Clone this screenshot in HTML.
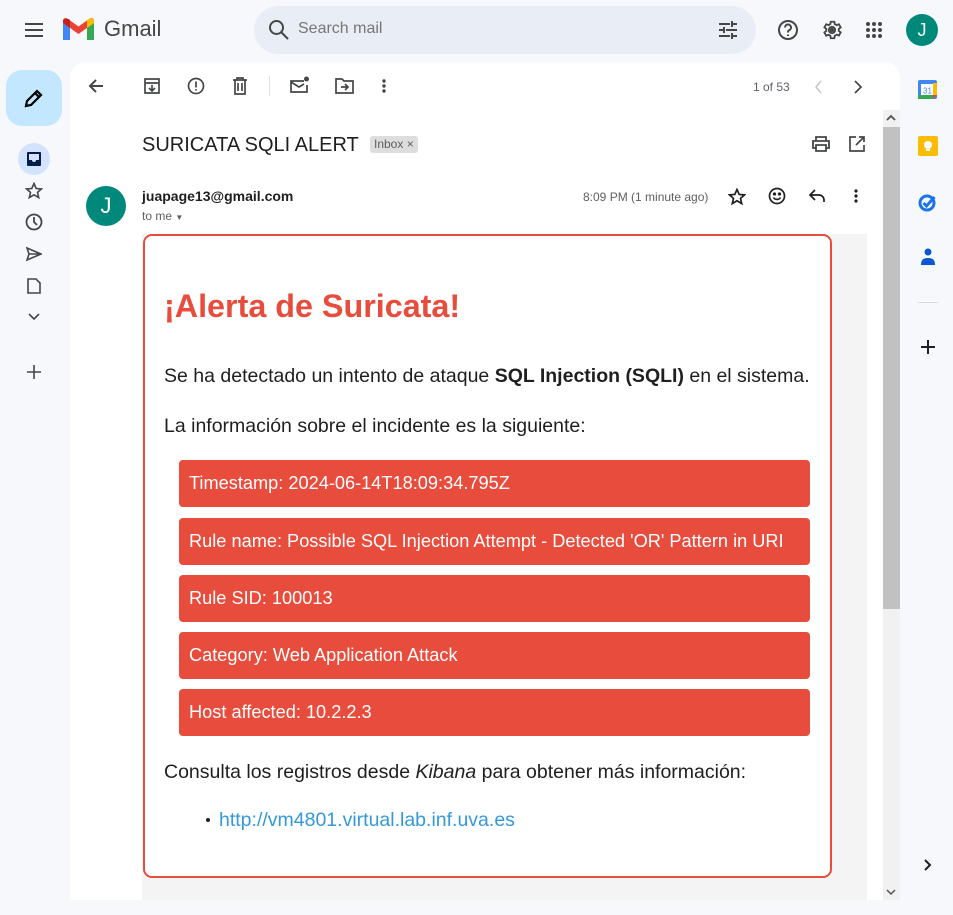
<!DOCTYPE html>
<html><head><meta charset="utf-8">
<style>
*{margin:0;padding:0;box-sizing:border-box}
body{width:953px;height:915px;background:#f6f8fc;font-family:"Liberation Sans",Arial,sans-serif;position:relative;overflow:hidden;color:#202124}
.a{position:absolute}
svg.i{position:absolute;fill:none;stroke:#444746;stroke-width:2}
.row{position:absolute;left:179px;width:631px;height:47px;background:#e74c3c;border-radius:4px;color:#fff;font-size:18.2px;line-height:47px;padding-left:10px}
</style></head><body>
<svg class="i" style="left:24px;top:20px" width="20" height="20"><path d="M1 4h18M1 10h18M1 16h18"/></svg>
<svg class="a" style="left:63px;top:18px" width="31" height="24" viewBox="0 0 31 24">
<path d="M0 5v17h7V10z" fill="#4285f4"/><path d="M24 10v12h7V5z" fill="#34a853"/>
<path d="M0 5l15.5 11L31 5V3c0-3-3-4-5-2L15.5 8.5 5 1C3-0.5 0 0 0 3z" fill="#ea4335"/>
<path d="M24 2v8l7-5V3c0-2-2-3.5-4-2.5z" fill="#fbbc04"/><path d="M0 3v2l7 5V2C5 0 0 0 0 3z" fill="#c5221f"/></svg>
<div class="a" style="left:104px;top:16px;font-size:22px;color:#444746">Gmail</div>
<div class="a" style="left:254px;top:6px;width:502px;height:48px;border-radius:24px;background:#e9eef6"></div>
<svg class="i" style="left:268px;top:19px" width="22" height="22"><circle cx="8.5" cy="8.5" r="6.5"/><path d="M13 13l7 7"/></svg>
<div class="a" style="left:298px;top:20px;font-size:16px;color:#757775">Search mail</div>
<svg class="i" style="left:718px;top:20px" width="20" height="20"><path d="M1 4h11M15 4h4M14 1v6M1 10h4M8 10h11M6 7v6M1 16h11M15 16h4M14 13v6"/></svg>
<svg class="i" style="left:777px;top:19px" width="22" height="22"><circle cx="11" cy="11" r="9"/><path d="M8 8.5a3 3 0 1 1 4 2.8c-1 .4-1 1-1 2.2M11 15.5v1.5"/></svg>
<svg class="a" style="left:821px;top:19px" width="22" height="22" viewBox="0 0 24 24"><path d="M12 15.5A3.5 3.5 0 1 1 12 8.5a3.5 3.5 0 0 1 0 7zm7.4-2.5l2.1 1.6-2 3.5-2.5-1a7.6 7.6 0 0 1-2 1.1L14.6 21h-4l-.4-2.7a7.6 7.6 0 0 1-2-1.1l-2.5 1-2-3.5L5.8 13a7 7 0 0 1 0-2.2L3.7 9.2l2-3.5 2.5 1a7.6 7.6 0 0 1 2-1.1L10.6 3h4l.4 2.6a7.6 7.6 0 0 1 2 1.1l2.5-1 2 3.5-2.1 1.6a7 7 0 0 1 0 2.2z" fill="none" stroke="#444746" stroke-width="2"/><circle cx="12" cy="12" r="2.5" fill="#444746"/></svg>
<svg class="a" style="left:865px;top:21px" width="18" height="18"><g fill="#444746"><circle cx="3" cy="3" r="2"/><circle cx="9" cy="3" r="2"/><circle cx="15" cy="3" r="2"/><circle cx="3" cy="9" r="2"/><circle cx="9" cy="9" r="2"/><circle cx="15" cy="9" r="2"/><circle cx="3" cy="15" r="2"/><circle cx="9" cy="15" r="2"/><circle cx="15" cy="15" r="2"/></g></svg>
<div class="a" style="left:906px;top:14px;width:32px;height:32px;border-radius:50%;background:#00897b;color:#fff;font-size:18px;line-height:32px;text-align:center">J</div>
<div class="a" style="left:6px;top:70px;width:56px;height:56px;border-radius:16px;background:#c2e7ff"></div>
<svg class="i" style="left:24px;top:88px;stroke:#000;stroke-width:2.2" width="20" height="20"><path d="M2 18l1-5L13 3l4 4L7 17z M11 5l4 4"/></svg>
<div class="a" style="left:18px;top:143px;width:32px;height:32px;border-radius:16px;background:#d3e3fd"></div>
<svg class="a" style="left:26px;top:151px" width="16" height="16"><rect x="1" y="1" width="14" height="14" rx="1" fill="#041e49"/><path d="M3 3h10v6h-3a2 2 0 0 1-4 0H3z" fill="#d3e3fd"/></svg>
<svg class="i" style="left:25px;top:182px;stroke-width:1.6" width="18" height="18"><path d="M9 1.5l2.2 5 5.3.4-4 3.5 1.2 5.2L9 12.8 4.3 15.6l1.2-5.2-4-3.5 5.3-.4z"/></svg>
<svg class="i" style="left:25px;top:213px;stroke-width:1.8" width="18" height="18"><circle cx="9" cy="9" r="7.5"/><path d="M9 4v5l3 3"/></svg>
<svg class="i" style="left:26px;top:246px;stroke-width:1.6" width="16" height="16"><path d="M1 2l14 6-14 6 2-6zM3 8h12"/></svg>
<svg class="i" style="left:27px;top:278px;stroke-width:1.6" width="14" height="16"><path d="M1 1h8l4 4v10H1z"/></svg>
<svg class="i" style="left:27px;top:312px;stroke-width:1.6" width="14" height="10"><path d="M2 2l5 5 5-5"/></svg>
<svg class="i" style="left:26px;top:364px;stroke-width:1.6" width="16" height="16"><path d="M8 1v14M1 8h14"/></svg>
<svg class="a" style="left:918px;top:80px" width="19" height="19"><rect x="0" y="0" width="19" height="19" rx="2" fill="#4285f4"/><rect x="3" y="4" width="13" height="11" fill="#fff"/><rect x="0" y="15" width="15" height="4" fill="#34a853"/><rect x="15" y="3" width="4" height="12" fill="#fbbc04"/><path d="M15 15h4l-4 4z" fill="#ea4335"/><text x="9.5" y="13.5" font-size="8" text-anchor="middle" fill="#4285f4" font-family="Liberation Sans">31</text></svg>
<svg class="a" style="left:918px;top:136px" width="20" height="20"><rect width="20" height="20" rx="2" fill="#fbbc04"/><circle cx="10" cy="9" r="4" fill="#fff"/><rect x="8" y="13" width="4" height="2" fill="#fff"/></svg>
<svg class="a" style="left:918px;top:192px" width="20" height="20"><circle cx="9" cy="11" r="7" fill="none" stroke="#1a73e8" stroke-width="3"/><path d="M5.5 11l3 3 8-9" fill="none" stroke="#1a73e8" stroke-width="3"/></svg>
<svg class="a" style="left:920px;top:248px" width="16" height="18"><circle cx="8" cy="4" r="3.5" fill="#0b57d0"/><path d="M1 17c0-5 2-7 7-7s7 2 7 7z" fill="#0b57d0"/></svg>
<div class="a" style="left:918px;top:302px;width:20px;height:1px;background:#dadce0"></div>
<svg class="i" style="left:920px;top:339px;stroke:#1f1f1f" width="16" height="16"><path d="M8 1v14M1 8h14"/></svg>
<svg class="i" style="left:923px;top:858px;stroke:#1f1f1f" width="10" height="14"><path d="M2 2l5 5-5 5"/></svg>
<div class="a" style="left:70px;top:62px;width:830px;height:838px;background:#fff;border-radius:16px 16px 0 0"></div>
<svg class="i" style="left:88px;top:78px" width="16" height="16"><path d="M15 8H2M8 2L2 8l6 6"/></svg>
<svg class="i" style="left:143px;top:77px;stroke-width:1.7" width="18" height="18"><path d="M2 2h14v14H2zM2 6h14M9 8v6M6 11l3 3 3-3"/></svg>
<svg class="i" style="left:187px;top:77px;stroke-width:1.7" width="18" height="18"><circle cx="9" cy="9" r="7.5"/><path d="M9 4.5v6M9 12v1.5"/></svg>
<svg class="i" style="left:232px;top:77px;stroke-width:1.7" width="16" height="18"><path d="M1 3h14M5 3V1h6v2M3 3v14h10V3M6 6v8M10 6v8"/></svg>
<div class="a" style="left:269px;top:76px;width:1px;height:20px;background:#e0e0e0"></div>
<svg class="i" style="left:290px;top:76px;stroke-width:1.7" width="20" height="18"><path d="M14 5H1v11h16V9M1 6l8 5 5-3"/><circle cx="16.5" cy="3" r="2.5" fill="#444746" stroke="none"/></svg>
<svg class="i" style="left:335px;top:78px;stroke-width:1.7" width="19" height="16"><path d="M1 1h6l2 2h9v12H1zM6 9h7M10 6l3 3-3 3"/></svg>
<svg class="a" style="left:381px;top:79px" width="6" height="16"><g fill="#444746"><circle cx="3" cy="2" r="1.7"/><circle cx="3" cy="7" r="1.7"/><circle cx="3" cy="12" r="1.7"/></g></svg>
<div class="a" style="left:753px;top:80px;font-size:12px;color:#5f6368">1 of 53</div>
<svg class="i" style="left:814px;top:80px;stroke:#c4c7c5;stroke-width:1.5" width="10" height="14"><path d="M7 1L2 7l5 6"/></svg>
<svg class="i" style="left:853px;top:80px;stroke-width:1.7" width="10" height="14"><path d="M2 1l6 6-6 6"/></svg>
<div class="a" style="left:883px;top:110px;width:17px;height:790px;background:#f1f1f1"></div>
<div class="a" style="left:883px;top:127px;width:17px;height:482px;background:#c1c1c1"></div>
<svg class="i" style="left:886px;top:114px;stroke:#505050;stroke-width:1.8" width="10" height="8"><path d="M1 6l4-4 4 4"/></svg>
<svg class="i" style="left:886px;top:888px;stroke:#505050;stroke-width:1.5" width="10" height="8"><path d="M1 2l4 4 4-4"/></svg>
<div class="a" style="left:142px;top:134px;font-size:20px;color:#1f1f1f">SURICATA SQLI ALERT</div>
<div class="a" style="left:370px;top:136px;height:17px;padding:0 4px;background:#dddddd;border-radius:3px;font-size:12px;line-height:17px;color:#5e5e5e">Inbox ×</div>
<svg class="i" style="left:812px;top:136px;stroke-width:1.8" width="18" height="16"><path d="M4 5V1h10v4M4 12H1V5h16v7h-3M4 9h10v6H4z"/></svg>
<svg class="i" style="left:849px;top:136px;stroke-width:1.7" width="16" height="16"><path d="M7 1H1v14h14V9M10 1h5v5M15 1L7 9"/></svg>
<div class="a" style="left:86px;top:186px;width:40px;height:40px;border-radius:50%;background:#00897b;color:#fff;font-size:22px;line-height:40px;text-align:center">J</div>
<div class="a" style="left:142px;top:188px;font-size:14px;font-weight:bold;color:#1f1f1f">juapage13@gmail.com</div>
<div class="a" style="left:142px;top:209px;font-size:12px;color:#5e5e5e">to me <span style="font-size:8px">▼</span></div>
<div class="a" style="left:583px;top:190px;font-size:12px;color:#5e5e5e">8:09 PM (1 minute ago)</div>
<svg class="i" style="left:728px;top:188px;stroke-width:1.7;stroke:#1f1f1f" width="18" height="18"><path d="M9 1.5l2.2 5 5.3.4-4 3.5 1.2 5.2L9 12.8 4.3 15.6l1.2-5.2-4-3.5 5.3-.4z"/></svg>
<svg class="i" style="left:768px;top:187px;stroke-width:1.7;stroke:#1f1f1f" width="18" height="18"><circle cx="9" cy="9" r="7.5"/><path d="M5.5 10.5c1.5 2.5 5.5 2.5 7 0"/><circle cx="6.5" cy="7" r=".8" fill="#1f1f1f"/><circle cx="11.5" cy="7" r=".8" fill="#1f1f1f"/></svg>
<svg class="i" style="left:809px;top:189px;stroke-width:1.7;stroke:#1f1f1f" width="16" height="14"><path d="M6 1L1 6l5 5M1 6h9a5 5 0 0 1 5 5v2"/></svg>
<svg class="a" style="left:853px;top:189px" width="6" height="16"><g fill="#1f1f1f"><circle cx="3" cy="2" r="1.6"/><circle cx="3" cy="7" r="1.6"/><circle cx="3" cy="12" r="1.6"/></g></svg>
<div class="a" style="left:142px;top:234px;width:725px;height:666px;background:#f4f4f4"></div>
<div class="a" style="left:143px;top:234px;width:689px;height:644px;background:#fff;border:2px solid #e74c3c;border-radius:9px"></div>
<div class="a" style="left:164px;top:288px;font-size:32.3px;font-weight:bold;color:#e74c3c">¡Alerta de Suricata!</div>
<div class="a" style="left:164px;top:365px;font-size:19.5px;color:#1f1f1f">Se ha detectado un intento de ataque <b>SQL Injection (SQLI)</b> en el sistema.</div>
<div class="a" style="left:164px;top:415px;font-size:19.5px;color:#1f1f1f">La información sobre el incidente es la siguiente:</div>
<div class="row" style="top:460px">Timestamp: 2024-06-14T18:09:34.795Z</div>
<div class="row" style="top:518px">Rule name: Possible SQL Injection Attempt - Detected 'OR' Pattern in URI</div>
<div class="row" style="top:575px">Rule SID: 100013</div>
<div class="row" style="top:632px">Category: Web Application Attack</div>
<div class="row" style="top:689px">Host affected: 10.2.2.3</div>
<div class="a" style="left:164px;top:761px;font-size:19.5px;color:#1f1f1f">Consulta los registros desde <i>Kibana</i> para obtener más información:</div>
<div class="a" style="left:206px;top:818px;width:4px;height:4px;border-radius:50%;background:#1f1f1f"></div>
<div class="a" style="left:219px;top:809px;font-size:19.5px;color:#3498db">http://vm4801.virtual.lab.inf.uva.es</div>
</body></html>
